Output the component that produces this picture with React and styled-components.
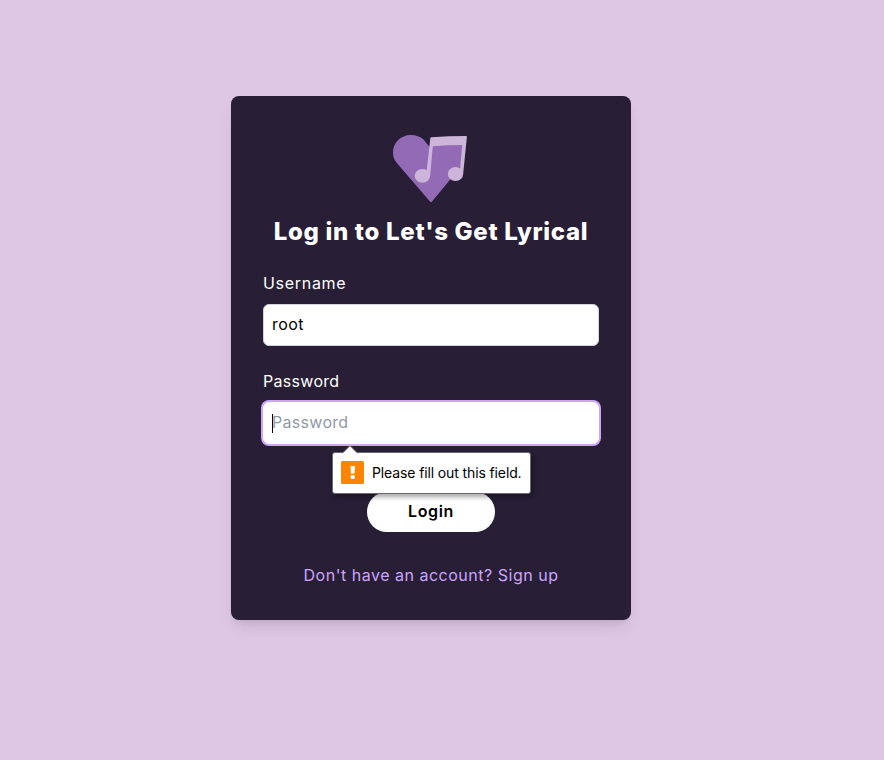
import React from "react";
import styled, { createGlobalStyle } from "styled-components";

const GlobalStyle = createGlobalStyle`
  *, *::before, *::after { box-sizing: border-box; }
  body {
    margin: 0;
    background: #dec7e5;
    font-family: Inter, "Open Sans", sans-serif;
  }
`;

const Page = styled.main`
  min-height: 760px;
  padding: 96px 22px 0 0;
  display: flex;
  justify-content: center;
  align-items: flex-start;
`;

const Card = styled.form`
  width: 400px;
  height: 524px;
  padding: 32px;
  display: flex;
  flex-direction: column;
  align-items: center;
  border-radius: 8px;
  background: #281e36;
  box-shadow: 0 10px 15px -3px rgba(0, 0, 0, 0.1), 0 4px 6px -4px rgba(0, 0, 0, 0.1);
`;

const Logo = styled.svg`
  width: 80px;
  height: 80px;
  flex: none;
  display: block;
`;

const Title = styled.h1`
  margin: 8px 0 24px;
  font-size: 24px;
  line-height: 32px;
  font-weight: 800;
  letter-spacing: 0.7px;
  white-space: nowrap;
  color: #fff;
`;

const Field = styled.div`
  position: relative;
  width: 100%;
  margin-bottom: 24px;
`;

const Label = styled.label`
  display: block;
  margin-bottom: 8px;
  padding-bottom: 2px;
  font-size: 16px;
  line-height: 22px;
  letter-spacing: ${(p) => p.$tracking};
  color: #fff;
`;

const InputBox = styled.div`
  display: flex;
  align-items: center;
  height: 42px;
  padding: 0 8px 2px;
  border: 1px solid ${(p) => (p.$focused ? "#fff" : "#d1d5db")};
  border-radius: 6px;
  background: #fff;
  box-shadow: ${(p) => (p.$focused ? "0 0 0 2px #cda5fb" : "none")};
  font-size: 16px;
  line-height: 24px;
  letter-spacing: ${(p) => p.$tracking};
  color: ${(p) => (p.$focused ? "#9299a7" : "#000")};
`;

const Caret = styled.span`
  width: 1px;
  height: 19px;
  margin: 3px -1px 0 0;
  background: #000;
`;

const Tooltip = styled.div`
  position: absolute;
  top: 82px;
  left: 69px;
  width: 199px;
  height: 42px;
  padding: 0 8px 1px;
  display: flex;
  align-items: center;
  gap: 8px;
  border: 1px solid #6b6b6b;
  border-radius: 3px;
  background: #fff;
  box-shadow: 2px 3px 5px rgba(0, 0, 0, 0.35);
  font-size: 14px;
  letter-spacing: -0.12px;
  white-space: nowrap;
  color: #000;
`;

const Pointer = styled.svg`
  position: absolute;
  top: -8px;
  left: 8px;
  width: 18px;
  height: 9px;
`;

const WarningIcon = styled.svg`
  width: 23px;
  height: 23px;
  flex: none;
`;

const LoginButton = styled.button`
  width: 128px;
  height: 40px;
  margin-top: 24px;
  flex: none;
  padding: 0 0 2px;
  border: 0;
  border-radius: 20px;
  background: #fff;
  color: #000;
  font: 600 16px/24px Inter, sans-serif;
  letter-spacing: 0.65px;
`;

const SignUpLink = styled.a`
  margin-top: 31px;
  font-size: 16px;
  line-height: 24px;
  letter-spacing: 0.51px;
  white-space: nowrap;
  color: #cda5fb;
`;

export default function App() {
  return (
    <>
      <GlobalStyle />
      <Page>
        <Card>
          <Logo viewBox="0 0 80 80" aria-hidden="true">
            <path
              d="M38.6 19L32.5 11.5C29.3 8.5 25 7 19.8 7C9.5 7 2 15 2 24.5C2 29 3.2 32 6 35.2L39 73.6Q40 75 41 73.6L70 38.5L72 16H40Z"
              fill="#926ab6"
            />
            <path
              d="M39.3 10.3Q39.4 9.3 40.5 9.2Q57 8 75 8Q76 8 75.9 9L72.1 46.5L68.8 44L71.2 17Q57 17 41.8 18.3L39.2 47.5L35.5 44Z"
              fill="#cdb4d9"
            />
            <ellipse cx="31.4" cy="47.8" rx="7.8" ry="6.9" fill="#cdb4d9" />
            <ellipse cx="64.5" cy="46" rx="7.7" ry="6.9" fill="#cdb4d9" />
          </Logo>
          <Title>Log in to Let's Get Lyrical</Title>
          <Field>
            <Label $tracking="0.7px">Username</Label>
            <InputBox $tracking="0.4px">root</InputBox>
          </Field>
          <Field>
            <Label $tracking="0.3px">Password</Label>
            <InputBox $focused $tracking="0.3px">
              <Caret />
              Password
            </InputBox>
            <Tooltip role="alert">
              <Pointer viewBox="0 0 18 9">
                <path d="M0 8L2 8L9 1L16 8L18 8V9H0Z" fill="#fff" />
                <path d="M1 8.5L9 .5L17 8.5" fill="none" stroke="#8b8390" strokeWidth=".7" />
              </Pointer>
              <WarningIcon viewBox="0 0 23 23" aria-hidden="true">
                <rect width="23" height="23" rx="1.5" fill="#ff8500" />
                <path d="M9.5 5H14L13.6 12.5H9.9Z" fill="#fff" />
                <rect x="9.7" y="14" width="4" height="4" rx="1.3" fill="#fff" />
              </WarningIcon>
              Please fill out this field.
            </Tooltip>
          </Field>
          <LoginButton type="button">Login</LoginButton>
          <SignUpLink>Don't have an account? Sign up</SignUpLink>
        </Card>
      </Page>
    </>
  );
}
